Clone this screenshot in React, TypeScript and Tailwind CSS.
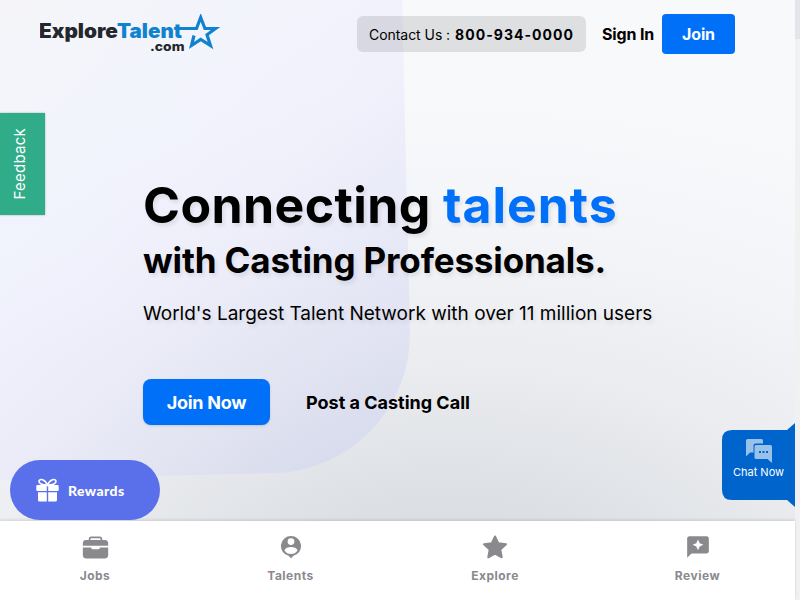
import type { ReactNode } from "react";
import { IoBriefcase } from "react-icons/io5";

function Logo() {
  return (
    <svg width="181" height="40" viewBox="0 0 181 40" fontFamily="Inter, sans-serif" fontWeight="900">
      <text x="-1" y="24" fontSize="19.500" fill="#24272b" textLength="79" lengthAdjust="spacingAndGlyphs">Explore</text>
      <text x="77" y="24" fontSize="19.500" fill="#1182cf" textLength="65" lengthAdjust="spacingAndGlyphs">Talent</text>
      <text x="110" y="36.500" fontSize="12.500" fontWeight="800" fill="#24272b" textLength="34.500" lengthAdjust="spacingAndGlyphs">.com</text>
      <path d="M139 14.500H156.500L160.700 3.500L164.900 14.500H175.500L167 20.800L170.500 31.500L160.700 25.500L151.500 31.500L154 21.500" fill="none" stroke="#1182cf" strokeWidth="3.200" />
    </svg>
  );
}

function GiftIcon() {
  return (
    <svg width="24" height="24" viewBox="0 0 24 24" fill="#fff">
      <path d="M11.500 7C9 1 3.500 .2 3 3.200C2.700 5.500 6 7 11.500 7C17 7 20.300 5.500 20 3.200C19.500 .2 14 1 11.500 7Z" fill="none" stroke="#fff" strokeWidth="1.600" />
      <path d="M1.500 7H10.800V13H1.500Q.3 13 .3 11.800V8.200Q.3 7 1.500 7ZM12.200 7H21.500Q22.700 7 22.700 8.200V11.800Q22.700 13 21.500 13H12.200ZM2 14.200H10.800V23.500H3.500Q2 23.500 2 22ZM12.200 14.200H21V22Q21 23.500 19.500 23.500H12.200Z" />
    </svg>
  );
}

function PersonPinIcon() {
  return (
    <svg width="22" height="24" viewBox="0 0 22 24" fill="currentColor">
      <path fillRule="evenodd" d="M11 1a10 10 0 0 1 2.500 19.700L11 23.200L8.500 20.700A10 10 0 0 1 11 1ZM11 3.200a3.400 3.400 0 1 0 0 6.800a3.400 3.400 0 0 0 0-6.800ZM4.500 15.400C5.900 17.700 8.300 19 11 19s5.100-1.300 6.500-3.600C16.800 13 13.800 12 11 12s-5.800 1-6.500 3.400Z" />
    </svg>
  );
}

function StarIcon() {
  return (
    <svg width="26" height="26" viewBox="0 0 26 26" fill="currentColor" stroke="currentColor" strokeWidth="2" strokeLinejoin="round">
      <path d="M13 2.500L16.200 9.300L24 10.300L18.300 15.500L19.700 23.300L13 19.700L6.300 23.300L7.700 15.500L2 10.300L9.800 9.300Z" />
    </svg>
  );
}

function ReviewIcon() {
  return (
    <svg width="26" height="26" viewBox="0 0 24 24" fill="currentColor">
      <path fillRule="evenodd" d="M20 2H4c-1.100 0-2 .9-2 2v18l4-4h14c1.100 0 2-.9 2-2V4c0-1.100-.9-2-2-2zm-6.430 9.570L12 15l-1.570-3.430L7 10l3.430-1.570L12 5l1.570 3.430L17 10l-3.430 1.570z" />
    </svg>
  );
}

function ChatIcon() {
  return (
    <svg width="26" height="24" viewBox="0 0 26 24">
      <path d="M1.500 0H15.500Q17 0 17 1.500V4.500H9.500Q7.500 4.500 7.500 6.500V13.500H4L0 17.500V1.500Q0 0 1.500 0Z" fill="#99c2eb" />
      <path d="M10 6H24.500Q26 6 26 7.500V24L21.500 20H10Q8.500 20 8.500 18.500V7.500Q8.500 6 10 6Z" fill="#99c2eb" />
      <path d="M13 12h2v2h-2zM16.500 12h2v2h-2zM20 12h2v2h-2z" fill="#0064cd" />
    </svg>
  );
}

function Backdrop() {
  return (
    <svg className="absolute inset-0" width="795" height="600" viewBox="0 0 795 600">
      <defs>
        <radialGradient id="base" gradientUnits="userSpaceOnUse" cx="0" cy="0" r="1" gradientTransform="translate(450 620) scale(840 530)">
          <stop offset="0" stopColor="#d4d8dd" />
          <stop offset=".22" stopColor="#dcdfe4" />
          <stop offset=".48" stopColor="#eaecef" />
          <stop offset=".75" stopColor="#f4f5f8" />
          <stop offset="1" stopColor="#f8f9fb" />
        </radialGradient>
        <linearGradient id="panel" gradientUnits="userSpaceOnUse" x1="0" y1="130" x2="340" y2="460">
          <stop offset="0" stopColor="#eef3ff" stopOpacity=".6" />
          <stop offset=".5" stopColor="#e8e7fd" stopOpacity=".45" />
          <stop offset="1" stopColor="#c9cdf2" stopOpacity=".38" />
        </linearGradient>
        <linearGradient id="sheen" x1="0" y1="0" x2=".5" y2=".5">
          <stop offset="0" stopColor="#f5f5f9" />
          <stop offset="1" stopColor="#f5f5f9" stopOpacity="0" />
        </linearGradient>
      </defs>
      <path d="M0 0H795V600H0Z" fill="url(#base)" />
      <path d="M0 0H402L410 330C411 410 350 469 277 473L0 480Z" fill="url(#panel)" />
      <path d="M0 0H402V240H0Z" fill="url(#sheen)" />
    </svg>
  );
}

function Tab({ icon, label }: { icon: ReactNode; label: string }) {
  return (
    <a className="flex flex-col items-center pt-[13px]">
      <span className="flex h-[26px] items-center">{icon}</span>
      <span className="mt-[8px] text-[12px] leading-4 font-bold tracking-[0.5px]">{label}</span>
    </a>
  );
}

export default function App() {
  return (
    <div className="flex h-[600px] w-[800px] overflow-hidden bg-[#f1f1f1] font-['Inter',sans-serif] whitespace-nowrap text-black">
      <div className="relative flex w-[795px] flex-col">
        <Backdrop />
        <header className="relative flex h-[68px] items-center pr-[60px] pl-[40px]">
          <Logo />
          <div className="ml-auto flex h-9 w-[229px] items-center rounded-md bg-black/10 pl-3 text-[14px]">
            <span className="w-[86px] tracking-[-0.05px]">Contact Us :</span>
            <b className="font-bold tracking-[1.05px]">800-934-0000</b>
          </div>
          <a className="ml-4 w-[60px] text-[16px] font-bold tracking-[-0.15px]">Sign In</a>
          <button className="h-10 w-[73px] rounded-[4px] bg-[#0070f8] text-[16px] font-bold tracking-[-0.15px] text-white">Join</button>
        </header>
        <main className="relative flex-1 pt-[105px] pl-[143px]">
          <h1 className="[text-shadow:2px_3px_4px_rgba(0,0,0,0.09)]">
            <span className="block text-[50px] leading-[64px] font-bold tracking-[0.4px]">
              Connecting <span className="tracking-[0.95px] text-[#0070f8]">talents</span>
            </span>
            <span className="block text-[35px] leading-[46px] font-bold tracking-[-0.15px]">with Casting Professionals.</span>
          </h1>
          <p className="mt-[17px] text-[19px] leading-7 [text-shadow:2px_3px_4px_rgba(0,0,0,0.09)]">World's Largest Talent Network with over 11 million users</p>
          <div className="mt-[51px] flex items-center">
            <button className="h-[46px] w-[127px] rounded-lg bg-[#0070f8] text-[18px] font-bold tracking-[-0.3px] text-white shadow-sm">Join Now</button>
            <a className="ml-9 text-[18px] font-bold">Post a Casting Call</a>
          </div>
        </main>
        <nav className="relative grid h-[79px] grid-cols-[190px_201px_208px_197px] bg-white text-[#8a898e] shadow-[0_-1px_3px_rgba(0,0,0,0.13)]">
          <Tab icon={<IoBriefcase size={27} />} label="Jobs" />
          <Tab icon={<PersonPinIcon />} label="Talents" />
          <Tab icon={<StarIcon />} label="Explore" />
          <Tab icon={<ReviewIcon />} label="Review" />
        </nav>
        <button className="absolute top-[113px] left-0 flex h-[102px] w-[45px] items-center justify-center bg-[#30ad88] pr-[5px] text-white shadow-[0_0_2px_rgba(0,0,0,0.3)]">
          <span className="rotate-180 text-[15px] leading-5 tracking-[0.25px] [writing-mode:vertical-rl]">Feedback</span>
        </button>
        <button className="absolute top-[460px] left-[10px] flex h-[60px] w-[150px] items-center rounded-[30px] bg-[#5a70ea] pl-[26px] font-['Lato',sans-serif] text-[14px] font-black tracking-[0.4px] text-white">
          <GiftIcon />
          <span className="ml-2">Rewards</span>
        </button>
        <div className="absolute top-[423px] right-0 h-[84px] w-[73px]">
          <svg className="absolute inset-0" width="73" height="84" viewBox="0 0 73 84">
            <path d="M10 7H65L73 0V84L65 77H10Q0 77 0 67V17Q0 7 10 7Z" fill="#0064cd" />
          </svg>
          <div className="relative flex flex-col items-center pt-4 text-[11px] leading-4 text-white">
            <ChatIcon />
            <span className="mt-[1px]">Chat Now</span>
          </div>
        </div>
      </div>
      <div className="h-[39px] w-[5px] bg-[#e4e5ea]" />
    </div>
  );
}
